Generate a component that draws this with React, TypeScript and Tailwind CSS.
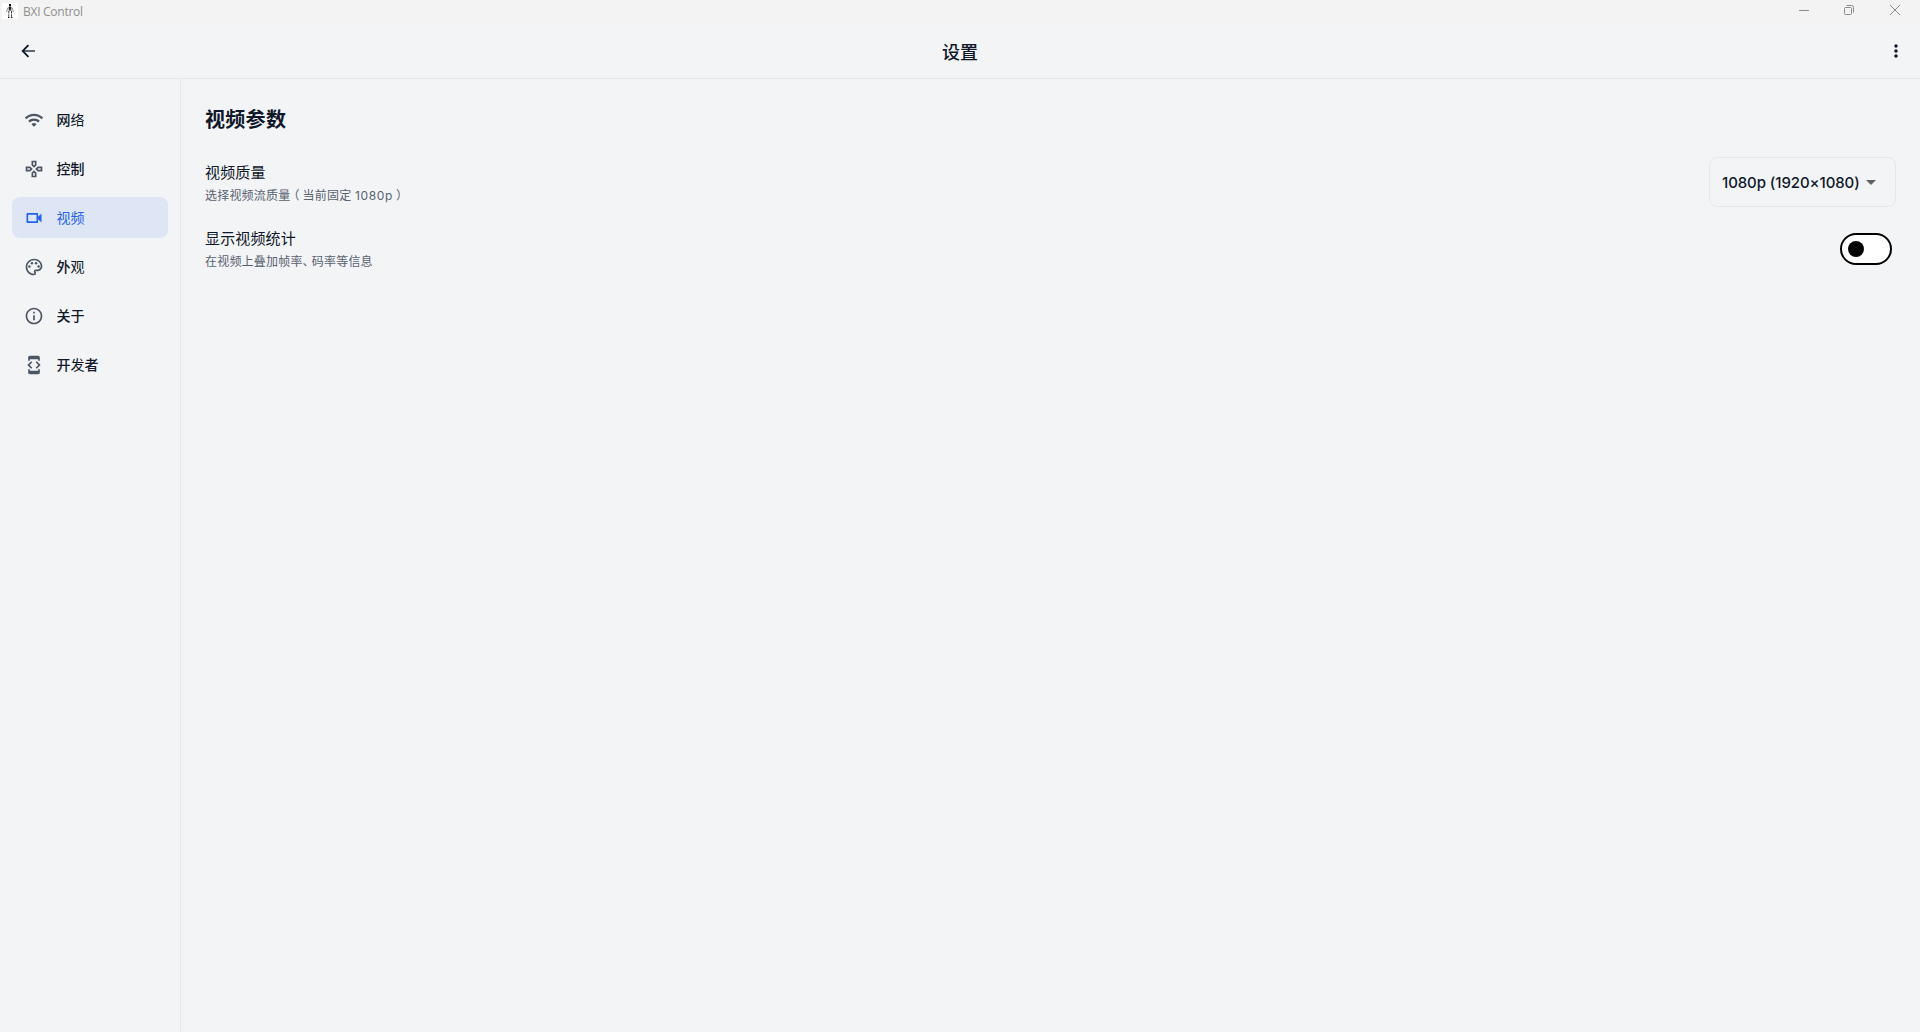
import type { ReactNode } from "react";
import {
  MdMoreVert,
  MdWifi,
  MdOutlineGamepad,
  MdOutlineVideocam,
  MdOutlinePalette,
  MdOutlineInfo,
  MdDeveloperMode,
  MdArrowDropDown,
} from "react-icons/md";

const thin = (text: string) => <span className="font-normal">{text}</span>;

const navItems = [
  { id: "network", label: <>网{thin("络")}</>, Icon: MdWifi },
  { id: "control", label: <>控制</>, Icon: MdOutlineGamepad },
  { id: "video", label: <>视频</>, Icon: MdOutlineVideocam, active: true },
  { id: "appearance", label: <>外{thin("观")}</>, Icon: MdOutlinePalette },
  { id: "about", label: <>关于</>, Icon: MdOutlineInfo },
  { id: "developer", label: <>开{thin("发")}者</>, Icon: MdDeveloperMode },
];

function TitleBar() {
  return (
    <div className="flex h-[23px] shrink-0 items-start justify-between bg-[#f3f3f3] text-[#8f8f8f]">
      <div className="flex h-6 items-center pl-0.5">
        <svg width="16" height="16" viewBox="0 0 16 16" className="mt-[-2px] bg-white">
          <path d="M7 1h2v2.2H7z" fill="#111" />
          <path d="M6.2 4h3.6l-.6 4H6.8z" fill="#777" />
          <path d="M7.2 3.5h1.6v3.2H7.2z" fill="#111" />
          <path d="M5.7 4.7 4.7 9M10.3 4.7l1.1 4.3" stroke="#999" fill="none" />
          <path d="M6.8 8v7M9.5 8v7" stroke="#444" strokeDasharray="2.5 .8" fill="none" />
          <path d="M6 14.5h1.4M9 14.5h1.4" stroke="#111" />
        </svg>
        <span className="ml-[5px] font-['Open_Sans','Noto_Sans',sans-serif] text-[12px] leading-6 tracking-[-0.27px]">BXI Control</span>
      </div>
      <svg width="130" height="22" viewBox="0 0 130 22" fill="none" stroke="#8a8a8a">
        <path d="M9 10.5h10" />
        <rect x="54.5" y="7.5" width="7" height="7" rx="1" />
        <path d="M56.5 5.5h5a2 2 0 0 1 2 2v5" />
        <path d="m100 5 10 10M110 5l-10 10" />
      </svg>
    </div>
  );
}

function BackArrow() {
  return (
    <svg width="20" height="20" viewBox="0 0 20 20" fill="none">
      <path d="M5 10h12" stroke="#5f6675" strokeWidth="2" />
      <path d="M10.4 4.2 4.7 10l5.7 5.8" stroke="#0f172a" strokeWidth="1.8" />
    </svg>
  );
}

function SettingRow({ title, hint, children }: { title: string; hint: ReactNode; children: ReactNode }) {
  return (
    <div className="flex h-[50px] items-center justify-between">
      <div className="pt-[5px]">
        <div className="text-[15px] leading-[22px] tracking-[0.15px]">{title}</div>
        <div className="mt-0.5 mb-px text-[12px] leading-5 tracking-[0.2px] text-[#586170]">{hint}</div>
      </div>
      {children}
    </div>
  );
}

export default function App() {
  return (
    <div className="flex h-screen flex-col overflow-hidden bg-[#f3f4f6] font-[Inter,'Noto_Sans_CJK_SC',sans-serif] text-[#0f172a]">
      <TitleBar />
      <header className="grid h-14 shrink-0 grid-cols-[1fr_auto_1fr] items-center border-b border-[#e5e7eb] px-[14px]">
        <button className="ml-1 w-5 pt-px">
          <BackArrow />
        </button>
        <h1 className="pt-[5px] text-[18px] leading-6 font-medium">设置</h1>
        <button className="w-5 justify-self-end pt-px">
          <MdMoreVert size={20} />
        </button>
      </header>
      <div className="flex min-h-0 flex-1">
        <nav className="flex w-[181px] shrink-0 flex-col gap-2 border-r border-[#e5e7eb] px-3 pt-5">
          {navItems.map(({ id, label, Icon, active }) => (
            <div
              key={id}
              className={
                active
                  ? "flex h-[41px] items-center gap-3 rounded-lg bg-[#dee5f5] px-3 text-[14px] text-[#2563eb]"
                  : "flex h-[41px] items-center gap-3 px-3 text-[14px] font-medium"
              }
            >
              <Icon size={20} className={active ? "text-[#2563eb]" : "text-[#4b5563]"} />
              <span className="ml-[0.5px]">{label}</span>
            </div>
          ))}
        </nav>
        <main className="flex-1 px-6 pt-[25px]">
          <h2 className="text-[20px] leading-8 font-bold tracking-[0.3px]">视频参数</h2>
          <div className="mt-[21px] flex flex-col gap-4">
            <SettingRow
              title="视频质量"
              hint={
                <>
                  选择视频流质量
                  <span className="mr-[3px] -ml-[3px]">（</span>
                  当前固定 <span className="tracking-[0.65px]">1080p</span>
                  <span className="ml-[3px]">）</span>
                </>
              }
            >
              <div className="flex h-[50px] w-[187px] items-center rounded-lg border border-[#e5e7eb] pl-3 text-[15px] font-medium tracking-[-0.08px]">
                <span className="pt-0.5">1080p (1920×1080)</span>
                <MdArrowDropDown size={24} className="-ml-px text-[#616161]" />
              </div>
            </SettingRow>
            <SettingRow
              title="显示视频统计"
              hint={
                <>
                  在视频上叠加帧率<span className="tracking-[-2.8px]">、</span>码率等信息
                </>
              }
            >
              <div className="mt-0.5 mr-1 flex h-8 w-[52px] items-center rounded-full border-2 border-black bg-white pl-1.5">
                <div className="size-4 rounded-full bg-black" />
              </div>
            </SettingRow>
          </div>
        </main>
      </div>
    </div>
  );
}
